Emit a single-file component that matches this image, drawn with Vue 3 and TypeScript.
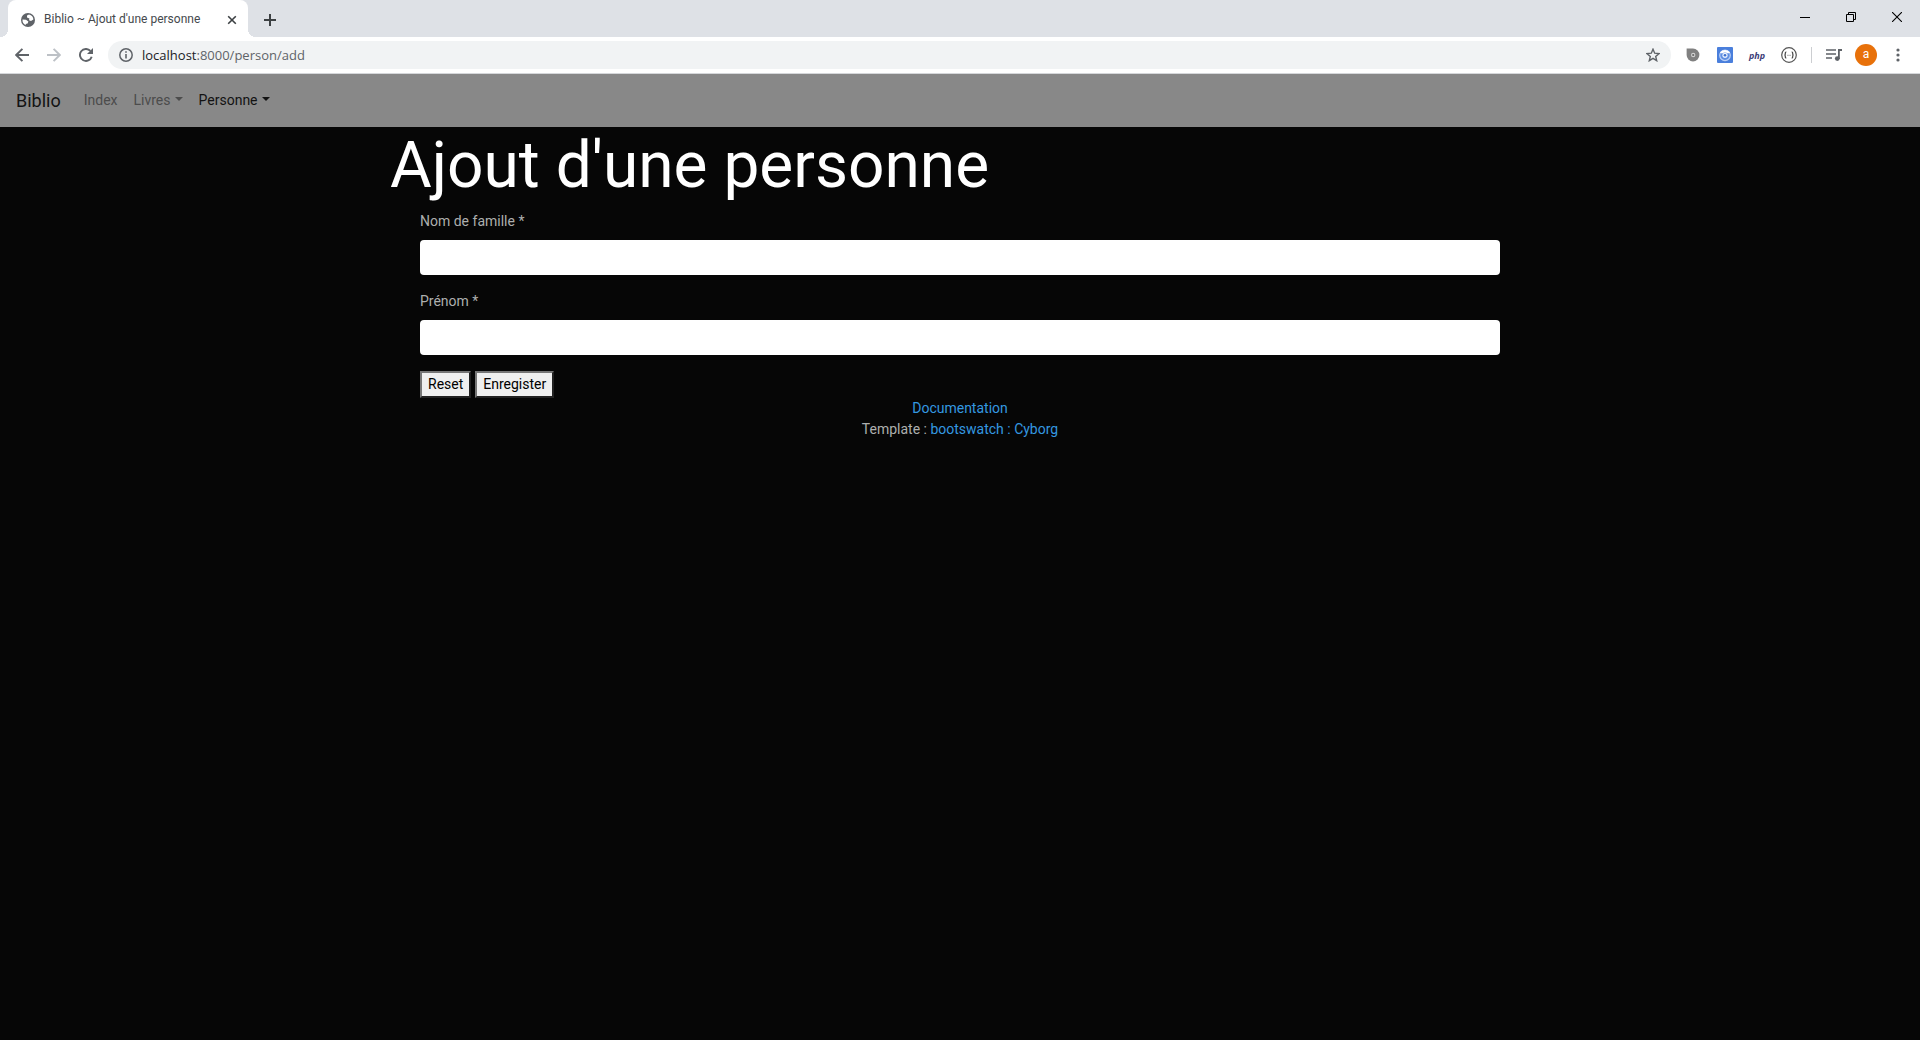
<script setup lang="ts">
import { ref } from 'vue'

interface NavItem {
  label: string
  dropdown: boolean
  active: boolean
}

const navItems: NavItem[] = [
  { label: 'Index', dropdown: false, active: false },
  { label: 'Livres', dropdown: true, active: false },
  { label: 'Personne', dropdown: true, active: true },
]

const lastName = ref('')
const firstName = ref('')

function resetForm(): void {
  lastName.value = ''
  firstName.value = ''
}
</script>

<template>
  <div class="window">
    <header class="chrome">
      <div class="tabstrip">
        <div class="tab">
          <svg class="favicon" width="14" height="14" viewBox="0 0 14 14" aria-hidden="true">
            <circle cx="7" cy="7" r="7" fill="#5f6368" />
            <path d="M8 1.4 L6 2.6 V4.4 L8.4 5.6 L8 7.2 L10 8 L12.4 6.6 A5.6 5.6 0 0 0 8 1.4 Z" fill="#fff" />
            <path d="M1.5 6.6 L5 6.8 L7.4 8.6 L6.6 10.6 L4.6 11 L5 12.3 A5.6 5.6 0 0 1 1.5 6.6 Z" fill="#fff" />
          </svg>
          <span class="tab-title">Biblio ~ Ajout d'une personne</span>
          <button class="tab-close" type="button" aria-label="Fermer l'onglet">
            <svg width="16" height="16" viewBox="0 0 16 16"><path d="M4.2 4.2 L11.8 11.8 M11.8 4.2 L4.2 11.8" stroke="#3c4043" stroke-width="1.6" /></svg>
          </button>
        </div>
        <button class="new-tab" type="button" aria-label="Nouvel onglet">
          <svg width="14" height="14" viewBox="0 0 14 14"><path d="M7 1 V13 M1 7 H13" stroke="#3c4043" stroke-width="2" /></svg>
        </button>
        <div class="window-controls">
          <button type="button" aria-label="Réduire">
            <svg width="10" height="10" viewBox="0 0 10 10"><path d="M0 5.5 H10" stroke="#000" /></svg>
          </button>
          <button type="button" aria-label="Restaurer">
            <svg width="10" height="10" viewBox="0 0 10 10"><path d="M0.5 2.5 H7.5 V9.5 H0.5 Z M2.5 2.5 V0.5 H9.5 V7.5 H7.5" fill="none" stroke="#000" /></svg>
          </button>
          <button type="button" aria-label="Fermer">
            <svg width="10" height="10" viewBox="0 0 10 10"><path d="M0 0 L10 10 M10 0 L0 10" stroke="#000" stroke-width="1.1" /></svg>
          </button>
        </div>
      </div>

      <div class="toolbar">
        <button class="tool" type="button" aria-label="Précédent">
          <svg width="14" height="14" viewBox="0 0 14 14"><path d="M14 7 H1.4 M7.4 0.8 L1.2 7 L7.4 13.2" fill="none" stroke="#5f6368" stroke-width="1.9" /></svg>
        </button>
        <button class="tool" type="button" aria-label="Suivant">
          <svg width="14" height="14" viewBox="0 0 14 14"><path d="M0 7 H12.6 M6.6 0.8 L12.8 7 L6.6 13.2" fill="none" stroke="#bdc1c6" stroke-width="1.9" /></svg>
        </button>
        <button class="tool" type="button" aria-label="Actualiser">
          <svg width="14" height="14" viewBox="0 0 14 14">
            <path d="M12.7 8.7 A6 6 0 1 1 11.4 2.9" fill="none" stroke="#5f6368" stroke-width="1.9" />
            <path d="M14 0 V6 H8 Z" fill="#5f6368" />
          </svg>
        </button>
        <div class="omnibox">
          <svg width="14" height="14" viewBox="0 0 14 14" aria-hidden="true">
            <circle cx="7" cy="7" r="6.2" fill="none" stroke="#5f6368" stroke-width="1.5" />
            <path d="M7 3.2 V4.8 M7 6 V10.6" stroke="#5f6368" stroke-width="1.6" />
          </svg>
          <span class="url"><span class="host">localhost</span>:8000/person/add</span>
          <svg width="14" height="14" viewBox="0 0 14 14" aria-hidden="true">
            <path d="M7 1.2 L8.7 5.2 L13 5.6 L9.7 8.4 L10.7 12.7 L7 10.4 L3.3 12.7 L4.3 8.4 L1 5.6 L5.3 5.2 Z" fill="none" stroke="#5f6368" stroke-width="1.4" />
          </svg>
        </div>
        <button class="tool" type="button" aria-label="Extension">
          <svg width="14" height="14" viewBox="0 0 14 14">
            <path d="M0.6 0.6 H7 A6.4 6.4 0 1 1 0.6 7 Z" fill="#808080" />
            <circle cx="7.2" cy="7" r="2.2" fill="#d0d0d0" />
            <circle cx="7.2" cy="7" r="1.1" fill="#666" />
          </svg>
        </button>
        <button class="tool" type="button" aria-label="Extension de navigation">
          <svg width="16" height="16" viewBox="0 0 16 16">
            <rect width="16" height="16" rx="1" fill="#4a7fdc" />
            <circle cx="8" cy="8.3" r="5.3" fill="#5f8fe2" stroke="#b9cff5" stroke-width="1.2" />
            <path d="M2.8 5.4 Q8 0.6 13.2 5.4 L11 6.6 Q8 4.4 5 6.6 Z" fill="#fff" />
            <circle cx="8" cy="8.3" r="2.6" fill="#e8f0fd" />
            <circle cx="8" cy="8.3" r="1.3" fill="#3c70cf" />
          </svg>
        </button>
        <button class="tool php" type="button">php</button>
        <button class="tool" type="button" aria-label="JSON">
          <svg width="16" height="16" viewBox="0 0 16 16">
            <circle cx="8" cy="8" r="7.3" fill="none" stroke="#555" stroke-width="1.2" />
            <path d="M5.4 5 H5 Q4.3 5 4.3 5.9 V7 Q4.3 8 3.4 8 Q4.3 8 4.3 9 V10.1 Q4.3 11 5 11 H5.4 M10.6 5 H11 Q11.7 5 11.7 5.9 V7 Q11.7 8 12.6 8 Q11.7 8 11.7 9 V10.1 Q11.7 11 11 11 H10.6" fill="none" stroke="#444" stroke-width="1.2" />
            <path d="M6.4 8.3 H9.6" stroke="#777" stroke-width="1" stroke-dasharray="0.8 0.4" />
          </svg>
        </button>
        <span class="divider"></span>
        <button class="tool" type="button" aria-label="Commandes multimédias">
          <svg width="16" height="14" viewBox="0 0 16 14">
            <path d="M0 2 H10 M0 6 H10 M0 10 H6" stroke="#5f6368" stroke-width="1.7" />
            <path d="M12.9 11 V2 H16" fill="none" stroke="#5f6368" stroke-width="1.8" />
            <circle cx="11.3" cy="10.6" r="2.4" fill="#5f6368" />
          </svg>
        </button>
        <button class="tool" type="button" aria-label="Profil"><span class="avatar">a</span></button>
        <button class="tool" type="button" aria-label="Menu">
          <svg width="4" height="14" viewBox="0 0 4 14" fill="#5f6368"><circle cx="2" cy="2" r="1.6" /><circle cx="2" cy="7" r="1.6" /><circle cx="2" cy="12" r="1.6" /></svg>
        </button>
      </div>
    </header>

    <nav class="navbar">
      <a class="brand" href="#">Biblio</a>
      <ul class="nav-list">
        <li v-for="item in navItems" :key="item.label">
          <a class="nav-link" :class="{ active: item.active, dropdown: item.dropdown }" href="#">{{ item.label }}</a>
        </li>
      </ul>
    </nav>

    <main class="container">
      <h1>Ajout d'une personne</h1>
      <form class="person-form" @submit.prevent>
        <div class="form-group">
          <label for="last-name">Nom de famille *</label>
          <input id="last-name" v-model="lastName" type="text" />
        </div>
        <div class="form-group">
          <label for="first-name">Prénom *</label>
          <input id="first-name" v-model="firstName" type="text" />
        </div>
        <div class="actions">
          <button type="button" @click="resetForm">Reset</button>
          <button type="submit">Enregister</button>
        </div>
      </form>
    </main>

    <footer class="footer">
      <div><a href="#">Documentation</a></div>
      <div>Template : <a href="#">bootswatch : Cyborg</a></div>
    </footer>
  </div>
</template>

<style>
body {
  margin: 0;
  background: #060606;
}
</style>

<style scoped>
.window {
  color: #adafae;
  font: 14px/21px Roboto, sans-serif;
}

a {
  text-decoration: none;
}

/* Browser frame */
.chrome {
  background: #fff;
  border-bottom: 1px solid #d5d7da;
}

.chrome button {
  display: flex;
  align-items: center;
  justify-content: center;
  padding: 0;
  border: 0;
  background: none;
}

.tabstrip {
  display: flex;
  height: 37px;
  padding-left: 8px;
  background: #dee1e6;
}

.tab {
  position: relative;
  display: flex;
  align-items: center;
  box-sizing: border-box;
  width: 240px;
  padding: 2px 8px 0 13px;
  border-radius: 8px 8px 0 0;
  background: #fff;
}

.tab::before,
.tab::after {
  content: '';
  position: absolute;
  bottom: 0;
  width: 8px;
  height: 8px;
}

.tab::before {
  right: 100%;
  background: radial-gradient(circle at 0 0, transparent 8px, #fff 8px);
}

.tab::after {
  left: 100%;
  background: radial-gradient(circle at 100% 0, transparent 8px, #fff 8px);
}

.tab-title {
  flex: 1;
  margin-left: 9px;
  color: #45494d;
  font-size: 12px;
  white-space: nowrap;
}

.new-tab {
  width: 28px;
  margin-left: 8px;
}

.chrome .new-tab {
  padding-top: 2px;
}

.window-controls {
  display: flex;
  height: 34px;
  margin-left: auto;
}

.window-controls button {
  width: 46px;
}

.toolbar {
  display: flex;
  align-items: center;
  height: 36px;
  padding: 0 6px;
}

.tool {
  flex: none;
  width: 32px;
  height: 28px;
}

.omnibox {
  display: flex;
  flex: 1;
  align-items: center;
  height: 28px;
  margin: 0 6px;
  padding: 0 11px;
  border-radius: 14px;
  background: #f1f3f4;
}

.url {
  flex: 1;
  margin-left: 9px;
  color: #5f6368;
  font-family: 'Open Sans', sans-serif;
  font-size: 13px;
}

.host {
  color: #202124;
}

.chrome .php {
  color: #3e3e78;
  font: italic 700 9px 'Open Sans', sans-serif;
}

.divider {
  width: 1px;
  height: 16px;
  margin: 0 6px;
  background: #ccced1;
}

.avatar {
  width: 22px;
  height: 22px;
  border-radius: 50%;
  background: #e8710a;
  color: #fff;
  font: 12px/21px Roboto, sans-serif;
  text-align: center;
}

/* Site navigation */
.navbar {
  display: flex;
  align-items: center;
  min-height: 53px;
  padding: 0 16px;
  background: #888;
}

.brand {
  margin-right: 15px;
  color: #131313;
  font-size: 18px;
}

.nav-list {
  display: flex;
  margin: 0;
  padding: 0;
  list-style: none;
}

.nav-link {
  display: block;
  padding: 8px;
  color: #4c4c4c;
}

.nav-link.active {
  color: #131313;
}

.dropdown::after {
  content: '';
  display: inline-block;
  margin-left: 4px;
  vertical-align: 4px;
  border: 4px solid transparent;
  border-top-color: currentColor;
  border-bottom: 0;
}

/* Page content */
.container {
  max-width: 1140px;
  margin: 0 auto;
}

h1 {
  margin: 0 0 7px;
  color: #fff;
  font-size: 64px;
  font-weight: 400;
  line-height: 77px;
}

.person-form {
  padding: 0 30px;
}

.form-group {
  margin-bottom: 16px;
}

label {
  display: block;
  margin-bottom: 8px;
}

input {
  display: block;
  box-sizing: border-box;
  width: 100%;
  height: 35px;
  padding: 6px 12px;
  border: 0;
  border-radius: 4px;
  background: #fff;
  color: #282828;
  font: inherit;
}

.actions {
  display: flex;
  gap: 4px;
}

.actions button {
  padding: 1px 6px;
  border: 2px solid;
  border-color: #767676 #212121 #212121 #767676;
  background: #efefef;
  color: #000;
  font: inherit;
}

.footer {
  text-align: center;
}

.footer a {
  color: #3498e0;
}
</style>
